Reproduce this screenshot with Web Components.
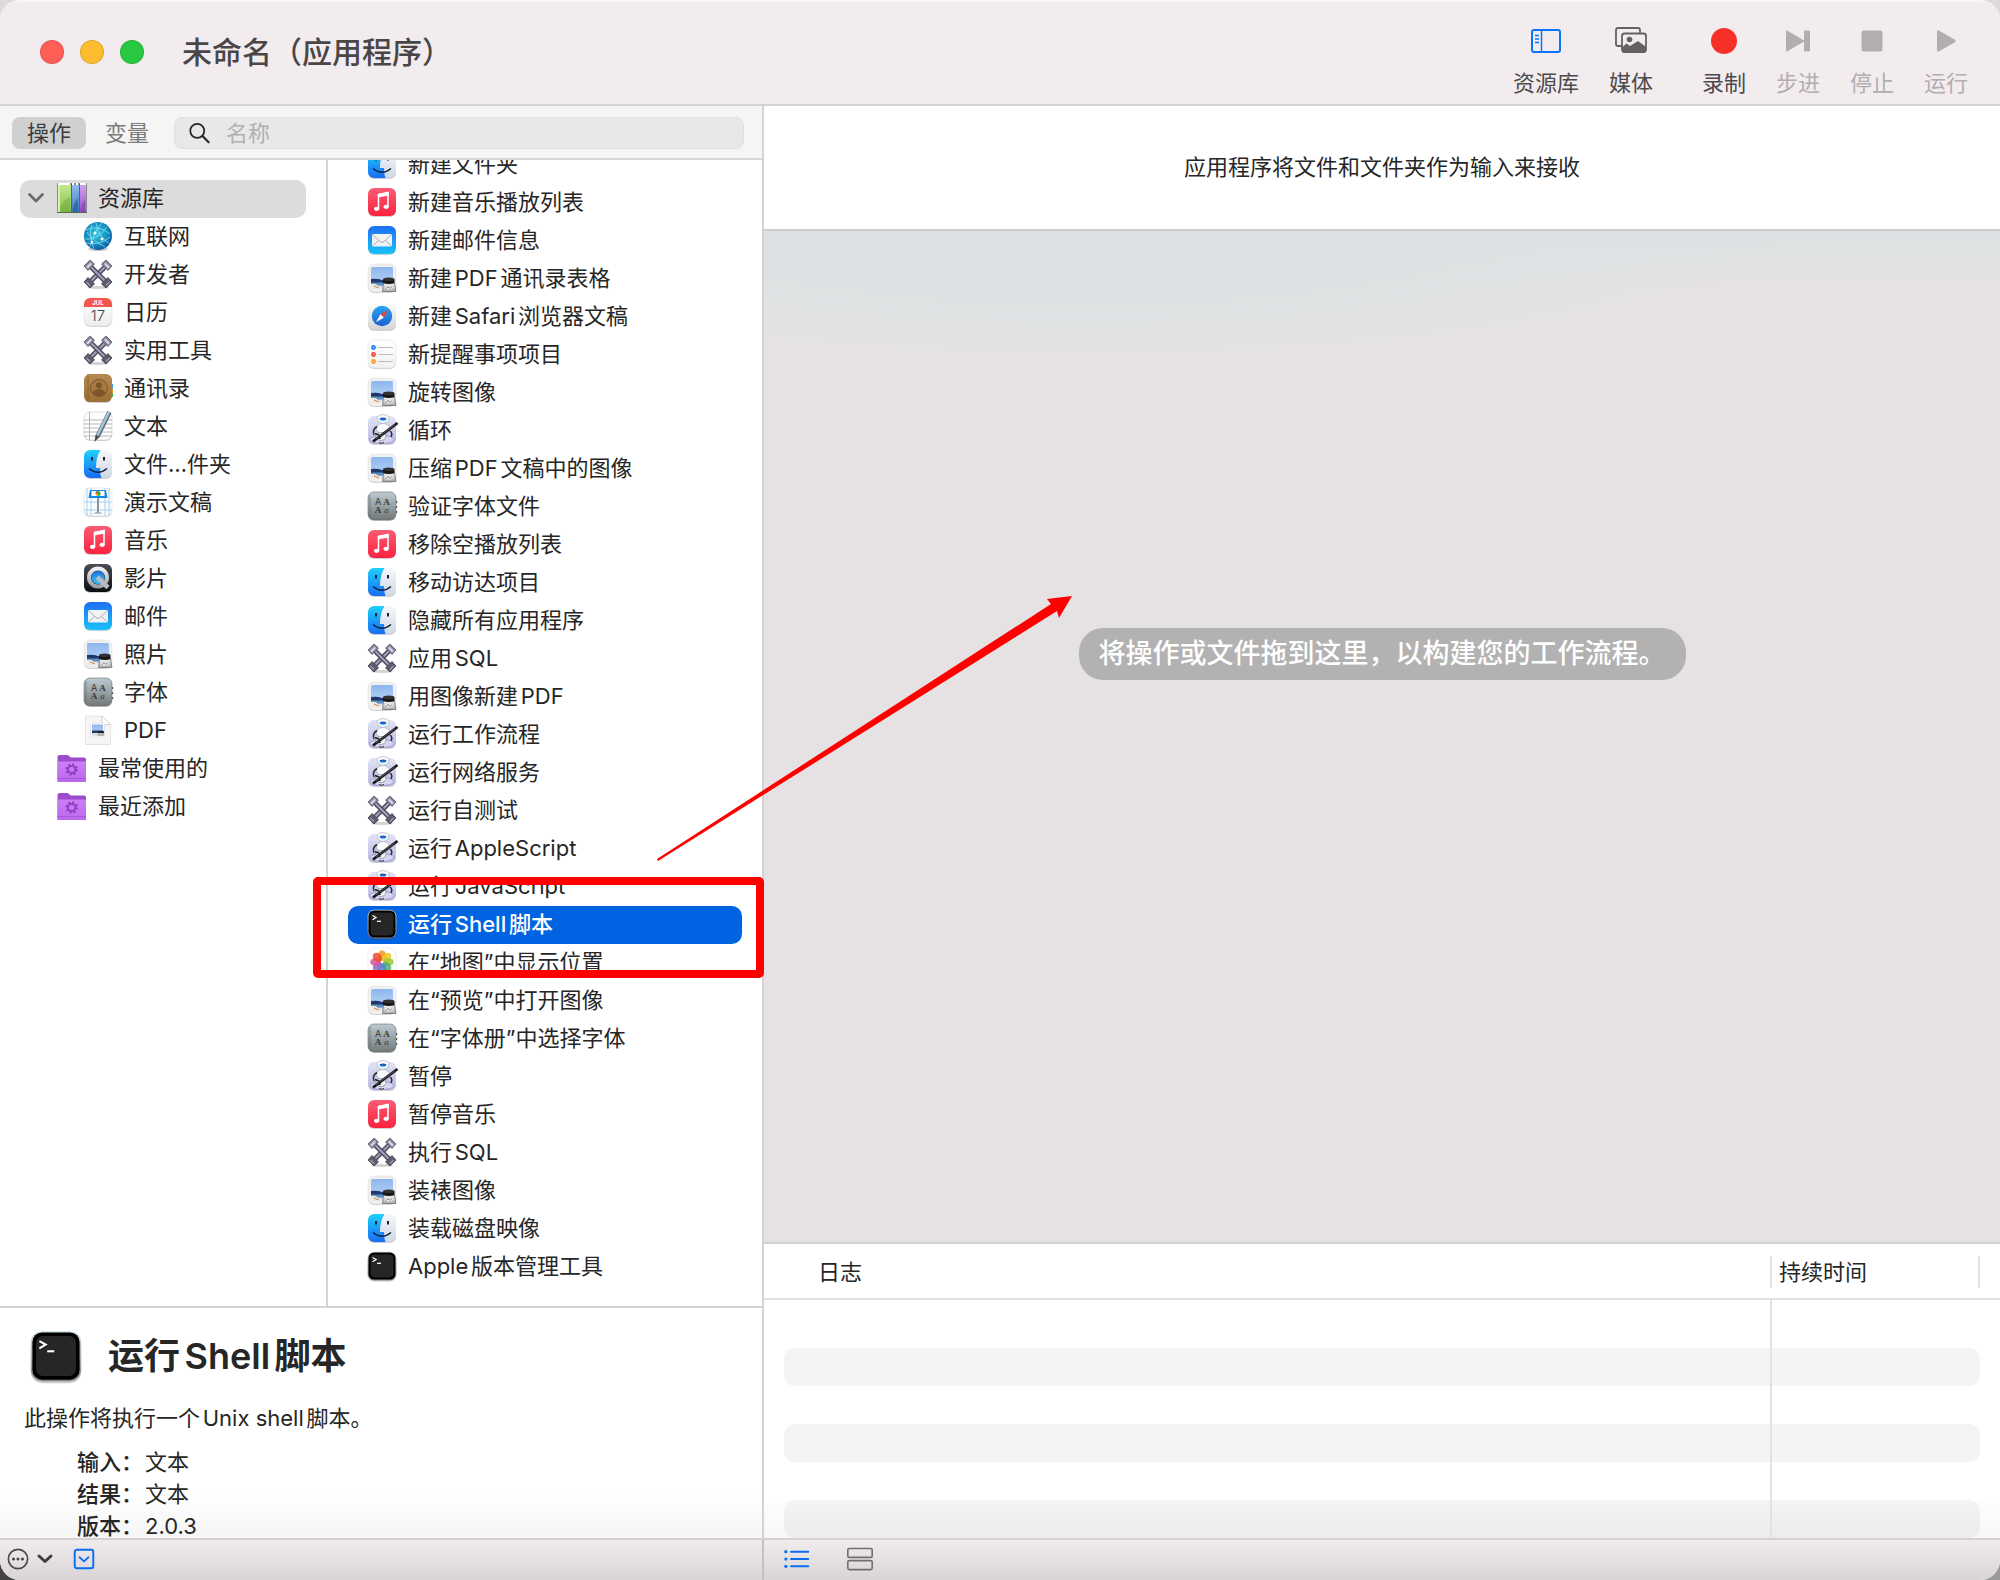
<!DOCTYPE html>
<html lang="zh-CN">
<head>
<meta charset="utf-8">
<title>未命名（应用程序）</title>
<style>
    html, body {
        margin: 0;
        height: 100%;
    }
    body {
        background: linear-gradient(90deg, #444 50%, #9a9a9a 50%) bottom / 100% 50% no-repeat #dedadc;
        font-family: "Inter", "Noto Sans CJK SC", sans-serif;
        font-size: 22px;
        line-height: 32px;
        color: #262626;
        text-autospace: normal;
        overflow: hidden;
    }
</style>
</head>
<body>
<automator-window>
    <window-titlebar slot="titlebar" heading="未命名（应用程序）">
        <tool-button icon="sidebar">资源库</tool-button>
        <tool-button icon="media">媒体</tool-button>
        <tool-button icon="record" class="apart">录制</tool-button>
        <tool-button icon="step" disabled>步进</tool-button>
        <tool-button icon="stop" disabled>停止</tool-button>
        <tool-button icon="run" disabled>运行</tool-button>
    </window-titlebar>

    <library-filter slot="filter"></library-filter>

    <row-list slot="sources" class="sources">
        <list-row icon="library" level="0" selected open>资源库</list-row>
        <list-row icon="internet" level="2">互联网</list-row>
        <list-row icon="tools" level="2">开发者</list-row>
        <list-row icon="calendar" level="2">日历</list-row>
        <list-row icon="tools" level="2">实用工具</list-row>
        <list-row icon="contacts" level="2">通讯录</list-row>
        <list-row icon="text" level="2">文本</list-row>
        <list-row icon="finder" level="2">文件…件夹</list-row>
        <list-row icon="keynote" level="2">演示文稿</list-row>
        <list-row icon="music" level="2">音乐</list-row>
        <list-row icon="quicktime" level="2">影片</list-row>
        <list-row icon="mail" level="2">邮件</list-row>
        <list-row icon="preview" level="2">照片</list-row>
        <list-row icon="fonts" level="2">字体</list-row>
        <list-row icon="pdf" level="2">PDF</list-row>
        <list-row icon="folder" level="1">最常使用的</list-row>
        <list-row icon="folder" level="1">最近添加</list-row>
    </row-list>

    <row-list slot="actions" class="actions" scroll-end>
        <list-row icon="finder">新建文件夹</list-row>
        <list-row icon="music">新建音乐播放列表</list-row>
        <list-row icon="mail">新建邮件信息</list-row>
        <list-row icon="preview">新建PDF通讯录表格</list-row>
        <list-row icon="safari">新建Safari浏览器文稿</list-row>
        <list-row icon="reminders">新提醒事项项目</list-row>
        <list-row icon="preview">旋转图像</list-row>
        <list-row icon="automator">循环</list-row>
        <list-row icon="preview">压缩PDF文稿中的图像</list-row>
        <list-row icon="fonts">验证字体文件</list-row>
        <list-row icon="music">移除空播放列表</list-row>
        <list-row icon="finder">移动访达项目</list-row>
        <list-row icon="finder">隐藏所有应用程序</list-row>
        <list-row icon="tools">应用SQL</list-row>
        <list-row icon="preview">用图像新建PDF</list-row>
        <list-row icon="automator">运行工作流程</list-row>
        <list-row icon="automator">运行网络服务</list-row>
        <list-row icon="tools">运行自测试</list-row>
        <list-row icon="automator">运行AppleScript</list-row>
        <list-row icon="automator">运行JavaScript</list-row>
        <list-row icon="terminal" selected active>运行Shell脚本</list-row>
        <list-row icon="photos">在“地图”中显示位置</list-row>
        <list-row icon="preview">在“预览”中打开图像</list-row>
        <list-row icon="fonts">在“字体册”中选择字体</list-row>
        <list-row icon="automator">暂停</list-row>
        <list-row icon="music">暂停音乐</list-row>
        <list-row icon="tools">执行SQL</list-row>
        <list-row icon="preview">装裱图像</list-row>
        <list-row icon="finder">装载磁盘映像</list-row>
        <list-row icon="terminal">Apple版本管理工具</list-row>
    </row-list>

    <action-detail slot="detail" icon="terminal">
        <span slot="name">运行Shell脚本</span>
        <span slot="summary">此操作将执行一个Unix shell脚本。</span>
        <span slot="input">文本</span>
        <span slot="result">文本</span>
        <span slot="version">2.0.3</span>
    </action-detail>

    <workflow-canvas slot="canvas">
        <span slot="accepts">应用程序将文件和文件夹作为输入来接收</span>
        <span>将操作或文件拖到这里，以构建您的工作流程。</span>
    </workflow-canvas>

    <log-table slot="log" rows="6"></log-table>

    <window-footer slot="footer"></window-footer>

    <markup-layer slot="markup"></markup-layer>
</automator-window>

<script>
// rounded app tile with a soft drop shadow
const tile = (fill, extra = "") => `
    <rect x="2" y="3" width="28" height="28" rx="6" fill="#000" opacity=".18"/>
    <rect x="2" y="2" width="28" height="28" rx="6" fill="${fill}" ${extra}/>`;

const grad = (id, top, bottom) => `
    <linearGradient id="${id}" x1="0" y1="0" x2="0" y2="1">
        <stop offset="0" stop-color="${top}"/><stop offset="1" stop-color="${bottom}"/>
    </linearGradient>`;

const wrench = `
    <path d="M6 6 26 26" stroke="#4f4c62" stroke-width="5"/>
    <path d="M6 6 26 26" stroke="#a19eb6" stroke-width="2.200"/>
    <path d="M2 8 8 2l4.500 4-6.500 6.500z" fill="#85829a" stroke="#565365" stroke-width=".8"/>
    <path d="M4 9 8.500 4.500l1.500 1.500L6 10.500z" fill="#d6d4e4"/>
    <path d="M30 24 24 30l-4.500-4 6.500-6.500z" fill="#5f5c6c" stroke="#403e4b" stroke-width=".8"/>
    <path d="M24 27.500 27.500 24" stroke="#a09eae" stroke-width="1.500"/>`;

const ICONS = {
    library: `
        <defs>${grad("g", "#c3e88c", "#86bf4c")}${grad("b", "#8dbdf0", "#3c78bd")}${grad("p", "#d0a2f0", "#9850c8")}</defs>
        <path d="M1 1h30v30H1z" fill="#8b8b8b"/>
        <rect x="2" y="3" width="14" height="27" fill="url(#g)"/><rect x="2" y="3" width="2" height="27" fill="#d9f0b4"/>
        <rect x="16" y="3" width="7" height="27" fill="url(#b)"/><rect x="24" y="3" width="6" height="27" fill="url(#p)"/>
        <path d="M4 30Q5 18 14 15v15z" fill="#67a43a" opacity=".45"/>
        <path d="M17 30q0-10 5-14v14z" fill="#155197" opacity=".5"/><path d="M25 30q0-9 4-12v12z" fill="#7134a4" opacity=".4"/>
        <path d="M2 2h28" stroke="#fff" stroke-width="2" stroke-dasharray="12 2 2 2 2 2"/>
        <path d="M15.500 2v28M23.500 2v28M1 30.500h30" stroke="#58684f" stroke-width="1"/>`,
    internet: `
        <defs><radialGradient id="g" cx=".45" cy=".4" r=".65"><stop offset="0" stop-color="#35c4de"/><stop offset=".6" stop-color="#148fc4"/><stop offset="1" stop-color="#0a4d97"/></radialGradient></defs>
        <ellipse cx="16" cy="29" rx="10" ry="2" fill="#000" opacity=".2"/>
        <circle cx="16" cy="16" r="14" fill="url(#g)"/>
        <path d="M4 10q12-6 24 4M3 19q12 2 22-12M8 27q2-13 12-24M14 3q2 14 14 21M5 12q6 9 18 15M10 5q-4 10 2 24M28 17q-10 9-24 6" fill="none" stroke="#a9f5fa" stroke-width=".8" opacity=".75"/>
        <circle cx="13" cy="13" r="1.500" fill="#fff"/><circle cx="20" cy="19" r="1.500" fill="#fff"/><circle cx="10" cy="22" r="1.300" fill="#fff"/>`,
    tools: `
        <ellipse cx="16" cy="29.500" rx="11" ry="1.500" fill="#000" opacity=".18"/>
        <g transform="matrix(-1 0 0 1 32 0)">${wrench}</g>${wrench}`,
    calendar: `
        <defs>${grad("g", "#ffffff", "#ececec")}</defs>${tile("url(#g)", 'stroke="#ddd" stroke-width=".5"')}
        <path d="M2 11V8a6 6 0 0 1 6-6h16a6 6 0 0 1 6 6v3z" fill="#f6564d"/>
        <text x="16" y="9" font-size="6" font-weight="700" fill="#fff" text-anchor="middle">JUL</text>
        <text x="16" y="25" font-size="15" font-weight="300" fill="#444" text-anchor="middle">17</text>`,
    contacts: `
        <defs>${grad("g", "#b78a52", "#9c6e37")}</defs>
        <path d="M27 12h4v5h-4z" fill="#3aa0e0"/><path d="M27 17h4v4h-4z" fill="#f09020"/><path d="M27 21h4v4h-4z" fill="#40b050"/>
        ${tile("url(#g)")}
        <path d="M6 2v28" stroke="#7f5728" stroke-width="1" opacity=".6"/>
        <circle cx="17" cy="16" r="8.500" fill="#a87a42" stroke="#7c5628" stroke-width="1"/>
        <circle cx="17" cy="13.500" r="3" fill="#7c5628"/><path d="M10.500 21q2-4 6.500-4t6.500 4q-3 3.500-6.500 3.500T10.500 21z" fill="#7c5628"/>`,
    text: `
        ${tile("#fdfdfd", 'stroke="#d0d0d0" stroke-width=".7"')}
        <path d="M2 10h28M2 14h28M2 18h28M2 22h28M2 26h28" stroke="#b9b9b9" stroke-width="1"/>
        <path d="M7.500 2v28" stroke="#f29a9a" stroke-width="1"/>
        <path d="M27.500 2 15.500 26.500" stroke="#5e6b74" stroke-width="4.500"/><path d="M27 2 15.500 25.500" stroke="#a7c9de" stroke-width="2.400"/>
        <path d="m13.500 25 4 2L12.500 32z" fill="#4a4a4a"/>`,
    finder: `
        <defs>${grad("g", "#1fd0fb", "#1a6cf6")}${grad("w", "#f7f8fa", "#cfd8e4")}</defs>
        ${tile("url(#w)")}
        <path d="M18.500 2H8a6 6 0 0 0-6 6v16a6 6 0 0 0 6 6h11.500q-1.500-4-1.500-10h-4Q14 9 18.500 2z" fill="url(#g)"/>
        <path d="M10 9v3.500M22 9v3.500" stroke="#14253d" stroke-width="2"/>
        <path d="M7 20.500q9 7.500 18 0" fill="none" stroke="#14253d" stroke-width="1.500"/>`,
    keynote: `
        ${tile("#fafdff", 'stroke="#ddd" stroke-width=".6"')}
        <path d="M9 2v28M23 2v28M2 16h28M2 24h28M5 2v28M27 2v28" stroke="#a9d0ec" stroke-width="1"/>
        <path d="M8 4h16l1.500 8h-19z" fill="#1287ea"/><path d="M9.500 5h13v5h-13z" fill="#fff"/>
        <circle cx="16" cy="7.500" r="2.500" fill="#f5a623"/><path d="M16 5a2.500 2.500 0 0 1 0 5z" fill="#35b24a"/><path d="M16 7.500h-2.500a2.500 2.500 0 0 1 2.500-2.500z" fill="#e8413a"/>
        <path d="M16 12v14" stroke="#7e8890" stroke-width="1.800"/><path d="M11 27.500q5-3 10 0z" fill="#8a949c"/>`,
    music: `
        <defs>${grad("g", "#fc5b73", "#fa2340")}</defs>${tile("url(#g)")}
        <path d="M12.500 8.500 22 6.500v14M12.500 8.500v14" fill="none" stroke="#fff" stroke-width="1.500"/>
        <path d="M11.800 8 22.700 6v3.500l-10.900 2z" fill="#fff"/>
        <ellipse cx="10.700" cy="22.800" rx="2.700" ry="2.100" fill="#fff"/><ellipse cx="20.200" cy="20.800" rx="2.700" ry="2.100" fill="#fff"/>`,
    quicktime: `
        <defs>${grad("g", "#4b4e53", "#0c0d0f")}${grad("s", "#eef0f6", "#9aa0ab")}${grad("c", "#1874e0", "#38c4fa")}</defs>${tile("url(#g)")}
        <circle cx="16" cy="15.500" r="9" fill="none" stroke="url(#s)" stroke-width="4"/>
        <circle cx="16" cy="15.500" r="6.500" fill="url(#c)"/>
        <path d="m15 15 11 10.500" stroke="#b6bbc4" stroke-width="4.500"/>`,
    mail: `
        <defs>${grad("g", "#1e6ff2", "#19c2fb")}</defs>${tile("url(#g)")}
        <rect x="6" y="10" width="20" height="12.500" rx="1.500" fill="#f2f3f5"/>
        <path d="m6.500 10.500 7.500 7q2 1.800 4 0l7.500-7M6.500 22l6.500-6M25.500 22 19 16" fill="none" stroke="#a9adb3" stroke-width="1"/>`,
    preview: `
        <defs>${grad("g", "#8db6ee", "#c4daf8")}${grad("l", "#f5f5f5", "#a8a8a8")}</defs>
        ${tile("#f0f0f0", 'stroke="#d9d9d9" stroke-width=".5"')}
        <path d="M5 7a2 2 0 0 1 2-2h18a2 2 0 0 1 2 2v20H5z" fill="url(#g)"/>
        <path d="M5 17q6-1 11 1h11v3H5z" fill="#20386b"/><path d="M5 20.500h22v3H5z" fill="#5a8fbd"/>
        <path d="M5 22q5-1 7 2l5 1v2H5z" fill="#f0ebe2"/><path d="m8 24 5 2" stroke="#c0824a" stroke-width="1"/>
        <path d="M17.500 21h11l1.500 8.500h-13.500z" fill="url(#l)" stroke="#666" stroke-width=".7"/>
        <ellipse cx="23" cy="25.500" rx="3.500" ry="2" fill="#eef2f7"/><path d="m20.500 26.500 1.500-2 2 2 1.500-2" fill="none" stroke="#4c5a6c" stroke-width=".8"/>
        <path d="M17 17.500h11.500v3.500q-5.500 2-11.500 0z" fill="#171717"/><ellipse cx="22.700" cy="17.200" rx="5.800" ry="1.800" fill="#333"/>`,
    fonts: `
        <defs>${grad("g", "#bccbd1", "#737877")}</defs>
        <path d="M30.500 11v2M30.500 16v2M30.500 21v2" stroke="#555" stroke-width="1.400"/>
        ${tile("url(#g)", 'stroke="#646b6d" stroke-width=".6"')}
        <path d="M4 5v22" stroke="#54595a" stroke-width="1" opacity=".5"/>
        <g font-size="9" fill="#343838" text-anchor="middle">
            <text x="12" y="14.500">A</text>
            <text x="20.500" y="14.500" font-family="Liberation Serif" font-weight="700">A</text>
            <text x="12" y="22.500" font-family="Liberation Serif" font-weight="700">A</text>
            <text x="20.500" y="22.500" font-family="Liberation Serif" font-style="italic">a</text>
        </g>`,
    pdf: `
        <defs>${grad("g", "#8db6ee", "#c4daf8")}</defs>
        <path d="M3.500 2.500H20l8.500 8.500v20h-25z" fill="#000" opacity=".15"/>
        <path d="M3.500 2H20l8.500 8.500v20h-25z" fill="#f5f5f5" stroke="#ddd" stroke-width=".6"/>
        <path d="M20 2v8.500h8.500z" fill="#fff" stroke="#c6c6c6" stroke-width=".8"/>
        <rect x="8.500" y="9" width="14" height="14" rx="2" fill="#fff" stroke="#d5d5d5" stroke-width=".6"/>
        <path d="M10 10.500h11v11H10z" fill="url(#g)"/><path d="M10 16.500h11V19H10z" fill="#20386b"/><path d="M10 19h11v2.500H10z" fill="#d8dde0"/>
        <path d="M16 17h6v2h-6z" fill="#222"/><path d="M16 19h6v3h-6.500z" fill="#b5b5b5"/>`,
    folder: `
        <defs>${grad("g", "#cc80f5", "#bb66ec")}</defs>
        <path d="M1.500 29V5q0-2 2-2h8l3.500 2.500h13q2 0 2 2V29q0 1-1 1h-26.500q-1 0-1-1z" fill="#9c4ccb"/>
        <path d="M1.500 9.500h28.500V28.500q0 1.500-1.500 1.500H3q-1.500 0-1.500-1.500z" fill="url(#g)"/>
        <path d="M1.500 26.500h28.500" stroke="#a552d6" stroke-width=".8"/>
        <circle cx="15.700" cy="17.500" r="3.700" fill="none" stroke="#8d3cc0" stroke-width="1.800"/>
        <circle cx="15.700" cy="17.500" r="5.300" fill="none" stroke="#8d3cc0" stroke-width="1.800" stroke-dasharray="2 2.160"/>`,
    safari: `
        <defs>${grad("g", "#ffffff", "#d4d4d6")}${grad("b", "#2ca4f2", "#1b62cf")}</defs>${tile("url(#g)")}
        <circle cx="16" cy="16" r="10.200" fill="url(#b)"/>
        <path d="m22 10-7.500 4.300 3.300 3.400z" fill="#f34235"/><path d="m10 22 4.500-7.700 3.300 3.400z" fill="#fff"/>`,
    reminders: `
        <defs>${grad("g", "#ffffff", "#f1f1f1")}</defs>${tile("url(#g)", 'stroke="#e0e0e0" stroke-width=".6"')}
        <path d="M12 9.500h15M12 16.500h15M12 23.500h15" stroke="#bdbdbd" stroke-width="1"/>
        <circle cx="7.500" cy="9.500" r="2.400" fill="#1b83f5"/><circle cx="7.500" cy="16.500" r="2.400" fill="#f24637"/><circle cx="7.500" cy="23.500" r="2.400" fill="#f79a23"/>
        <g fill="#fff" opacity=".6"><circle cx="7.500" cy="9.500" r=".8"/><circle cx="7.500" cy="16.500" r=".8"/><circle cx="7.500" cy="23.500" r=".8"/></g>`,
    automator: `
        <defs>${grad("g", "#e2e2f6", "#b9b8e0")}</defs>${tile("url(#g)")}
        <ellipse cx="16" cy="25.500" rx="12" ry="4" fill="#d6d6f0" stroke="#9694cc" stroke-width=".8"/>
        <ellipse cx="17" cy="14.500" rx="6.500" ry="5" fill="#fafafe" stroke="#9a9aae" stroke-width=".6"/>
        <ellipse cx="15" cy="22.500" rx="5" ry="4" fill="#f0f0f6" stroke="#77778a" stroke-width=".6"/>
        <path d="M11 12.500q-5 3-3 8.500M24 17q3 2 1 6" fill="none" stroke="#2a2a30" stroke-width="1.500"/>
        <path d="M11 2.500q6-4 12 0 .5 6-6 7Q11 8.500 11 2.500z" fill="#fbfbfe" stroke="#a6a6ba" stroke-width=".6"/>
        <path d="M13.500 4.300q3.500-1.600 7 0-.5 2.700-3.500 2.700t-3.500-2.700z" fill="#1d5fc4"/><path d="M15 6.200q2 1 4 0" stroke="#5fd2f8" stroke-width="1.200" fill="none"/>
        <path d="M7 27.500 31.500 9" stroke="#17171a" stroke-width="2.800"/><path d="m10 25 19-14.300" stroke="#7a7a86" stroke-width=".6"/>
        <path d="m9 19.500 4 1.500 1 4" fill="none" stroke="#222" stroke-width="1.600"/>
        <path d="M13 28.500q2 1.500 5 0" fill="none" stroke="#333" stroke-width="1"/>`,
    terminal: `
        <defs>${grad("g", "#c9dde4", "#8c8589")}</defs>
        <rect x="1.600" y="3" width="28.800" height="28.500" rx="6.500" fill="#000" opacity=".2"/>
        <rect x="1.600" y="1.800" width="28.800" height="28.600" rx="6.500" fill="url(#g)"/>
        <rect x="2.500" y="2.500" width="27" height="27" rx="5.500" fill="#000"/>
        <rect x="4.600" y="4.600" width="22.800" height="22.800" rx="3.800" fill="#262626"/>
        <path d="m6.500 7.500 3.600 2-3.600 2.200" fill="none" stroke="#fff" stroke-width="1.200"/><path d="M11 13.300h4" stroke="#fff" stroke-width="1.200"/>`,
    photos: `
        ${tile("#fff", 'stroke="#e2e2e2" stroke-width=".6"')}
        <g>${["#f7931b", "#f2c81c", "#a0c935", "#4db072", "#4a86d9", "#8a6cc4", "#d8539a", "#ee4a34"]
            .map((c, i) => `<ellipse cx="16" cy="9.500" rx="4" ry="5.300" fill="${c}" opacity=".85" transform="rotate(${i * 45} 16 16)"/>`).join("")}</g>
        <circle cx="16" cy="16" r="1" fill="#fff"/>`,
    sidebar: `
        <rect x="2" y="5" width="28" height="22" rx="2" fill="none" stroke="#0a74ff" stroke-width="2"/>
        <path d="M11.500 5v22" stroke="#0a74ff" stroke-width="1.500"/><path d="M5 10.500h4M5 14h4M5 17.500h4" stroke="#0a74ff" stroke-width="1.500"/>`,
    media: `
        <path d="M7 21H3q-2 0-2-2V5q0-2 2-2h20q2 0 2 2v3" fill="none" stroke="#656163" stroke-width="1.800"/>
        <rect x="7" y="8.500" width="24" height="18.500" rx="2.500" fill="none" stroke="#656163" stroke-width="1.800"/>
        <circle cx="14.500" cy="14.500" r="2.800" fill="#656163"/>
        <path d="m7.500 22 4-3.500 3.500 2.500 8-5 7.500 5.500V26q0 2-2 2h-19q-2 0-2-2z" fill="#656163"/>`,
    record: `<circle cx="16" cy="16" r="13" fill="#f73027"/>`,
    step: `<path d="M4 6.500q0-1.500 1.500-.8l16.500 9.800V6.500q0-1 1-1h4q1 0 1 1v19q0 1-1 1h-4q-1 0-1-1v-9L5.500 26.300Q4 27 4 25.500z" fill="#b3adb0"/>`,
    stop: `<rect x="5.500" y="5.500" width="21" height="21" rx="2" fill="#b3adb0"/>`,
    run: `<path d="M7 6.500q0-2 1.800-1l16.500 9.500q1.200 1 0 2L8.800 26.500Q7 27.500 7 25.500z" fill="#b3adb0"/>`,
    search: `<circle cx="14" cy="13.500" r="8" fill="none" stroke="#262626" stroke-width="2"/><path d="m20 19.500 7 7" stroke="#262626" stroke-width="2.400" stroke-linecap="round"/>`,
    chevron: `<path d="m3 9 13 13 13-13" fill="none" stroke="#6b6b6b" stroke-width="5.500" stroke-linecap="round" stroke-linejoin="round"/>`,
    more: `
        <circle cx="16" cy="16" r="14" fill="none" stroke="#4a4748" stroke-width="2.400"/>
        <circle cx="9.500" cy="16" r="2.200" fill="#4a4748"/><circle cx="16" cy="16" r="2.200" fill="#4a4748"/><circle cx="22.500" cy="16" r="2.200" fill="#4a4748"/>`,
    arrow: `<path d="m4 10 12 11 12-11" fill="none" stroke="#403d3e" stroke-width="6" stroke-linecap="round" stroke-linejoin="round"/>`,
    collapse: `
        <rect x="2.500" y="2.500" width="27" height="27" rx="3" fill="none" stroke="#0a6cf2" stroke-width="2.800"/>
        <path d="m9.500 13.500 6.500 6 6.500-6" fill="none" stroke="#0a6cf2" stroke-width="2.600" stroke-linecap="round"/>`,
    rows: `
        <g fill="#0a6cf2"><circle cx="3.500" cy="7" r="2"/><circle cx="3.500" cy="16" r="2"/><circle cx="3.500" cy="25" r="2"/></g>
        <path d="M10 7h21M10 16h21M10 25h21" stroke="#0a6cf2" stroke-width="2.600" stroke-linecap="round"/>`,
    flow: `
        <rect x="1" y="3" width="30" height="11" rx="1.800" fill="none" stroke="#736e70" stroke-width="2"/>
        <rect x="1" y="18" width="30" height="11" rx="1.800" fill="none" stroke="#736e70" stroke-width="2"/>`,
};

class AppIcon extends HTMLElement {
    constructor() {
        super();
        this.attachShadow({ mode: "open" });
    }

    connectedCallback() {
        const name = this.getAttribute("name");
        this.shadowRoot.innerHTML = `
            <style>
                :host { display: block; width: 32px; height: 32px; flex: none; }
                svg { display: block; width: 100%; height: 100%; overflow: visible; }
            </style>
            <svg viewBox="0 0 32 32" aria-hidden="true">${ICONS[name] || ""}</svg>
        `;
    }
}

class ToolButton extends HTMLElement {
    constructor() {
        super();
        this.attachShadow({ mode: "open" });
    }

    connectedCallback() {
        const disabled = this.hasAttribute("disabled");
        this.shadowRoot.innerHTML = `
            <style>
                :host { display: block; }
                :host(.apart) { margin-left: 19px; }
                button {
                    display: flex;
                    flex-direction: column;
                    align-items: center;
                    gap: 10px;
                    padding: 0;
                    border: 0;
                    background: none;
                    font: inherit;
                    line-height: 32px;
                    color: #4e4a4c;
                }
                button:disabled { color: #b3adb0; }
            </style>
            <button type="button" ${disabled ? "disabled" : ""}>
                <app-icon name="${this.getAttribute("icon")}"></app-icon>
                <span><slot></slot></span>
            </button>
        `;
    }
}

class WindowTitlebar extends HTMLElement {
    constructor() {
        super();
        this.attachShadow({ mode: "open" });
    }

    connectedCallback() {
        this.shadowRoot.innerHTML = `
            <style>
                :host {
                    display: flex;
                    align-items: center;
                    height: 104px;
                    padding: 0 32px 0 40px;
                    border-bottom: 2px solid #d6d2d4;
                    background: #f2ecee;
                    box-shadow: inset 0 2px #f8f5f6;
                }
                .lights { display: flex; gap: 16px; }
                .lights button {
                    width: 24px;
                    height: 24px;
                    padding: 0;
                    border: 1px solid rgba(0, 0, 0, 0.12);
                    border-radius: 50%;
                }
                .close { background: #ff5f57; }
                .minimize { background: #febc2e; }
                .zoom { background: #28c840; }
                h1 {
                    margin: 0 auto 0 38px;
                    font-size: 30px;
                    font-weight: 500;
                    line-height: 40px;
                    color: #4a4647;
                }
                .tools { display: flex; gap: 30px; padding-top: 20px; }
            </style>
            <div class="lights">
                <button class="close" type="button" aria-label="关闭"></button>
                <button class="minimize" type="button" aria-label="最小化"></button>
                <button class="zoom" type="button" aria-label="缩放"></button>
            </div>
            <h1>${this.getAttribute("heading")}</h1>
            <div class="tools"><slot></slot></div>
        `;
    }
}

class LibraryFilter extends HTMLElement {
    constructor() {
        super();
        this.attachShadow({ mode: "open" });
        this.shadowRoot.innerHTML = `
            <style>
                :host {
                    display: flex;
                    align-items: center;
                    height: 50px;
                    padding: 2px 18px 0 12px;
                    border-bottom: 2px solid #d6d6d6;
                    background: #f5f5f5;
                }
                button {
                    height: 32px;
                    padding: 0 15px;
                    border: 0;
                    border-radius: 8px;
                    background: none;
                    font: inherit;
                    line-height: 32px;
                    color: #7b7b7b;
                }
                button + button { margin-left: 4px; }
                button.active { background: #d0d0d0; color: #3c3c3c; }
                .search {
                    display: flex;
                    align-items: center;
                    flex: 1;
                    height: 30px;
                    margin-left: 10px;
                    padding-left: 10px;
                    gap: 13px;
                    border: 1px solid #dfdfdf;
                    border-radius: 8px;
                    background: #e8e8e8;
                }
                app-icon { width: 28px; height: 28px; }
                input {
                    flex: 1;
                    min-width: 0;
                    padding: 0;
                    border: 0;
                    outline: 0;
                    background: none;
                    font: inherit;
                    line-height: 30px;
                    height: 30px;
                }
                input::placeholder { color: #b0b0b0; }
            </style>
            <button class="active" type="button">操作</button>
            <button type="button">变量</button>
            <label class="search">
                <app-icon name="search"></app-icon>
                <input type="text" placeholder="名称" aria-label="名称">
            </label>
        `;
        this.attachEventListeners();
    }

    attachEventListeners() {
        const buttons = this.shadowRoot.querySelectorAll("button");
        buttons.forEach(button => {
            button.addEventListener("click", () => {
                buttons.forEach(b => b.classList.toggle("active", b === button));
            });
        });
    }
}

class ListRow extends HTMLElement {
    constructor() {
        super();
        this.attachShadow({ mode: "open" });
    }

    connectedCallback() {
        const open = this.hasAttribute("open");
        this.shadowRoot.innerHTML = `
            <style>
                :host { display: block; flex: none; }
                button {
                    display: flex;
                    align-items: center;
                    gap: 10px;
                    width: 100%;
                    height: 38px;
                    padding: 0 10px 2px 18px;
                    border: 0;
                    border-radius: 10px;
                    background: none;
                    font: inherit;
                    line-height: 36px;
                    color: inherit;
                    text-align: left;
                    white-space: nowrap;
                }
                :host([level="0"]) button { padding-left: 8px; }
                :host([level="1"]) button { padding-left: 36px; }
                :host([level="2"]) button { padding-left: 62px; }
                :host([selected]) button { background: #dcdcdc; }
                :host([active]) button {
                    background: #0063e1;
                    color: #fff;
                    font-weight: 500;
                }
                .chevron { width: 16px; height: 16px; margin-right: 2px; }
            </style>
            <button type="button">
                ${open ? '<app-icon class="chevron" name="chevron"></app-icon>' : ""}
                <app-icon name="${this.getAttribute("icon")}"></app-icon>
                <span><slot></slot></span>
            </button>
        `;
    }
}

class RowList extends HTMLElement {
    constructor() {
        super();
        this.attachShadow({ mode: "open" });
        this.shadowRoot.innerHTML = `
            <style>
                :host {
                    display: flex;
                    flex-direction: column;
                    box-sizing: border-box;
                    min-height: 0;
                    padding: 20px;
                    overflow-y: auto;
                    scrollbar-width: none;
                }
                :host(.actions) { padding-top: 0; }
            </style>
            <slot></slot>
        `;
    }

    connectedCallback() {
        if (this.hasAttribute("scroll-end")) {
            // the rows have to be laid out before the list can be scrolled
            window.addEventListener("DOMContentLoaded", () => {
                this.scrollTop = this.scrollHeight;
            });
        }
    }
}

class ActionDetail extends HTMLElement {
    constructor() {
        super();
        this.attachShadow({ mode: "open" });
    }

    connectedCallback() {
        this.shadowRoot.innerHTML = `
            <style>
                :host {
                    display: block;
                    box-sizing: border-box;
                    height: 230px;
                    padding: 20px 24px 0;
                    overflow: hidden;
                    background: linear-gradient(#fff 80%, #f5f5f5);
                }
                header { display: flex; align-items: center; gap: 24px; padding-left: 4px; }
                app-icon { width: 56px; height: 56px; }
                h2 { margin: 0; font-size: 36px; font-weight: 600; line-height: 48px; }
                p { margin: 18px 0 12px; }
                dl {
                    display: grid;
                    grid-template-columns: auto 1fr;
                    column-gap: 2px;
                    margin: 0;
                    padding-left: 53px;
                }
                dt { font-weight: 500; }
                dd { margin: 0; }
            </style>
            <header>
                <app-icon name="${this.getAttribute("icon")}"></app-icon>
                <h2><slot name="name"></slot></h2>
            </header>
            <p><slot name="summary"></slot></p>
            <dl>
                <dt>输入：</dt><dd><slot name="input"></slot></dd>
                <dt>结果：</dt><dd><slot name="result"></slot></dd>
                <dt>版本：</dt><dd><slot name="version"></slot></dd>
            </dl>
        `;
    }
}

class WorkflowCanvas extends HTMLElement {
    constructor() {
        super();
        this.attachShadow({ mode: "open" });
        this.shadowRoot.innerHTML = `
            <style>
                :host { display: flex; flex-direction: column; min-height: 0; }
                .accepts {
                    display: flex;
                    align-items: center;
                    justify-content: center;
                    height: 121px;
                    padding-bottom: 2px;
                    border-bottom: 2px solid #c9cdce;
                    background: #fff;
                }
                .canvas {
                    display: flex;
                    flex: 1;
                    justify-content: center;
                    align-items: flex-start;
                    padding-top: 397px;
                    border-bottom: 2px solid #d3d1d2;
                    background:
                        radial-gradient(56% 130px at 26% 0, #dce2e3 50%, rgba(220, 226, 227, 0)),
                        linear-gradient(#dce2e3, #e6e2e4 56px);
                }
                .hint {
                    padding: 10px 20px;
                    border-radius: 24px;
                    background: #b2b2b2;
                    color: #fff;
                    font-size: 27px;
                    font-weight: 500;
                }
            </style>
            <div class="accepts"><slot name="accepts"></slot></div>
            <div class="canvas"><div class="hint"><slot></slot></div></div>
        `;
    }
}

class LogTable extends HTMLElement {
    constructor() {
        super();
        this.attachShadow({ mode: "open" });
    }

    connectedCallback() {
        const rows = Number(this.getAttribute("rows")) || 0;
        this.shadowRoot.innerHTML = `
            <style>
                :host {
                    display: block;
                    padding: 0 20px;
                    background:
                        linear-gradient(#e2e2e2, #e2e2e2) 0 54px / 100% 2px no-repeat,
                        linear-gradient(#fff 86%, #f7f7f7);
                }
                table {
                    width: 100%;
                    border-spacing: 0;
                    table-layout: fixed;
                }
                .time { width: 210px; }
                th {
                    height: 32px;
                    padding: 12px 0 12px 34px;
                    font-weight: 400;
                    text-align: left;
                    line-height: 30px;
                }
                th + th {
                    padding-left: 9px;
                    background:
                        linear-gradient(#e2e2e2, #e2e2e2) left / 2px 32px no-repeat,
                        linear-gradient(#e2e2e2, #e2e2e2) right / 2px 32px no-repeat;
                }
                td { height: 38px; padding: 0; }
                td + td { border-left: 2px solid #e2e2e2; }
                .gap td { height: 10px; }
                .stripe td { background: #f3f5f5; background-clip: padding-box; }
                .stripe:last-child td { background: linear-gradient(#f3f5f5, #ebeded); }
                .stripe td:first-child { border-radius: 10px 0 0 10px; }
                .stripe td:last-child { border-radius: 0 10px 10px 0; }
            </style>
            <table>
                <colgroup><col><col class="time"></colgroup>
                <thead>
                    <tr><th>日志</th><th>持续时间</th></tr>
                </thead>
                <tbody>
                    <tr class="gap"><td></td><td></td></tr>
                    ${Array.from({ length: rows }, (_, i) => `<tr class="${i % 2 ? "stripe" : ""}"><td></td><td></td></tr>`).join("")}
                </tbody>
            </table>
        `;
    }
}

class WindowFooter extends HTMLElement {
    constructor() {
        super();
        this.attachShadow({ mode: "open" });
        this.shadowRoot.innerHTML = `
            <style>
                :host {
                    display: grid;
                    grid-template-columns: 764px 1fr;
                    height: 40px;
                    border-top: 2px solid #d6d0d2;
                    background: linear-gradient(#f0ebed, #d9d5d7);
                }
                div {
                    display: flex;
                    align-items: center;
                    box-sizing: border-box;
                    padding-bottom: 2px;
                }
                .left { padding-left: 7px; border-right: 2px solid #c4c0c2; }
                .right { padding-left: 19px; gap: 38px; }
                button { padding: 0; border: 0; background: none; }
                app-icon { width: 22px; height: 22px; }
                .menu { display: flex; align-items: center; gap: 8px; margin-right: 20px; }
                .menu .arrow { width: 16px; height: 16px; }
                .right app-icon { width: 26px; height: 26px; }
            </style>
            <div class="left">
                <button class="menu" type="button" aria-label="更多">
                    <app-icon name="more"></app-icon>
                    <app-icon class="arrow" name="arrow"></app-icon>
                </button>
                <button type="button" aria-label="描述"><app-icon name="collapse"></app-icon></button>
            </div>
            <div class="right">
                <button type="button" aria-label="日志"><app-icon name="rows"></app-icon></button>
                <button type="button" aria-label="工作流程"><app-icon name="flow"></app-icon></button>
            </div>
        `;
    }
}

// red box and arrow drawn over the window
class MarkupLayer extends HTMLElement {
    constructor() {
        super();
        this.attachShadow({ mode: "open" });
        this.shadowRoot.innerHTML = `
            <style>
                :host {
                    display: block;
                    position: absolute;
                    top: 0;
                    left: 0;
                    pointer-events: none;
                }
                svg { display: block; }
            </style>
            <svg width="1100" height="1000" aria-hidden="true">
                <rect x="317" y="881" width="443" height="93" rx="1" fill="none" stroke="#fe0000" stroke-width="8" stroke-linejoin="round"/>
                <path d="M657 859 1051 604 1047 599 1072 596 1059 618 1057 611 658 861z" fill="#fe0000"/>
            </svg>
        `;
    }
}

class AutomatorWindow extends HTMLElement {
    constructor() {
        super();
        this.attachShadow({ mode: "open" });
        this.shadowRoot.innerHTML = `
            <style>
                :host {
                    display: flex;
                    flex-direction: column;
                    position: relative;
                    height: 100vh;
                    border-radius: 20px;
                    overflow: hidden;
                    background: #fff;
                }
                .body {
                    display: grid;
                    grid-template-columns: 764px 1fr;
                    flex: 1;
                    min-height: 0;
                }
                .library {
                    display: flex;
                    flex-direction: column;
                    min-height: 0;
                    border-right: 2px solid #d3d3d3;
                }
                .columns {
                    display: grid;
                    grid-template-columns: 326px 1fr;
                    grid-template-rows: minmax(0, 1fr);
                    flex: 1;
                    min-height: 0;
                    border-bottom: 2px solid #d3d3d3;
                }
                .columns > div {
                    display: grid;
                    grid-template-rows: minmax(0, 1fr);
                }
                .columns > div + div { border-left: 2px solid #d3d3d3; }
                .workflow {
                    display: grid;
                    grid-template-rows: minmax(0, 1fr) auto;
                    min-height: 0;
                }
            </style>
            <slot name="titlebar"></slot>
            <div class="body">
                <div class="library">
                    <slot name="filter"></slot>
                    <div class="columns">
                        <div><slot name="sources"></slot></div>
                        <div><slot name="actions"></slot></div>
                    </div>
                    <slot name="detail"></slot>
                </div>
                <div class="workflow">
                    <slot name="canvas"></slot>
                    <slot name="log"></slot>
                </div>
            </div>
            <slot name="footer"></slot>
            <slot name="markup"></slot>
        `;
    }
}

// Define the custom elements
customElements.define("app-icon", AppIcon);
customElements.define("tool-button", ToolButton);
customElements.define("window-titlebar", WindowTitlebar);
customElements.define("library-filter", LibraryFilter);
customElements.define("list-row", ListRow);
customElements.define("row-list", RowList);
customElements.define("action-detail", ActionDetail);
customElements.define("workflow-canvas", WorkflowCanvas);
customElements.define("log-table", LogTable);
customElements.define("window-footer", WindowFooter);
customElements.define("markup-layer", MarkupLayer);
customElements.define("automator-window", AutomatorWindow);
</script>
</body>
</html>
